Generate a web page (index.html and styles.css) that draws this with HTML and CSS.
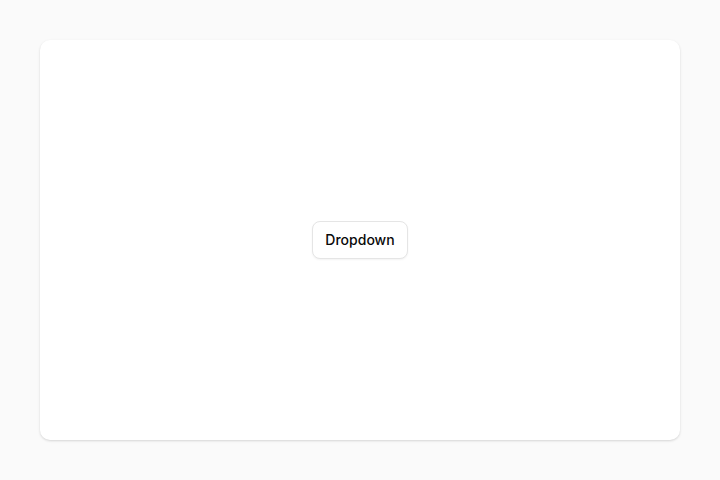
FILE: index.html
```html
<!DOCTYPE html>
<html lang="en">
<head>
<meta charset="UTF-8">
<meta name="viewport" content="width=device-width, initial-scale=1.0">
<title>Dropdown</title>
<link rel="stylesheet" href="styles.css">
</head>
<body>

<div class="card">
    <button class="dropdown-trigger" type="button">Dropdown</button>
</div>

</body>
</html>
```

FILE: styles.css
```css
body {
    margin: 0;
    padding: 40px;
    background: #fafafa;
    font-family: Inter, "Noto Sans", sans-serif;
    color: #0a0a0a;
}
.card {
    height: 400px;
    background: #fff;
    border-radius: 10px;
    box-shadow: 0 1px 3px rgba(0, 0, 0, 0.1), 0 1px 2px rgba(0, 0, 0, 0.06);
    display: flex;
    justify-content: center;
    align-items: center;
}
.dropdown-trigger {
    font-family: inherit;
    font-size: 14px;
    font-weight: 500;
    line-height: 20px;
    color: #0a0a0a;
    padding: 8px 12px;
    background: #fff;
    border: 1px solid #e5e5e5;
    border-radius: 8px;
    box-shadow: 0 1px 2px rgba(0, 0, 0, 0.05);
    cursor: pointer;
}
```
